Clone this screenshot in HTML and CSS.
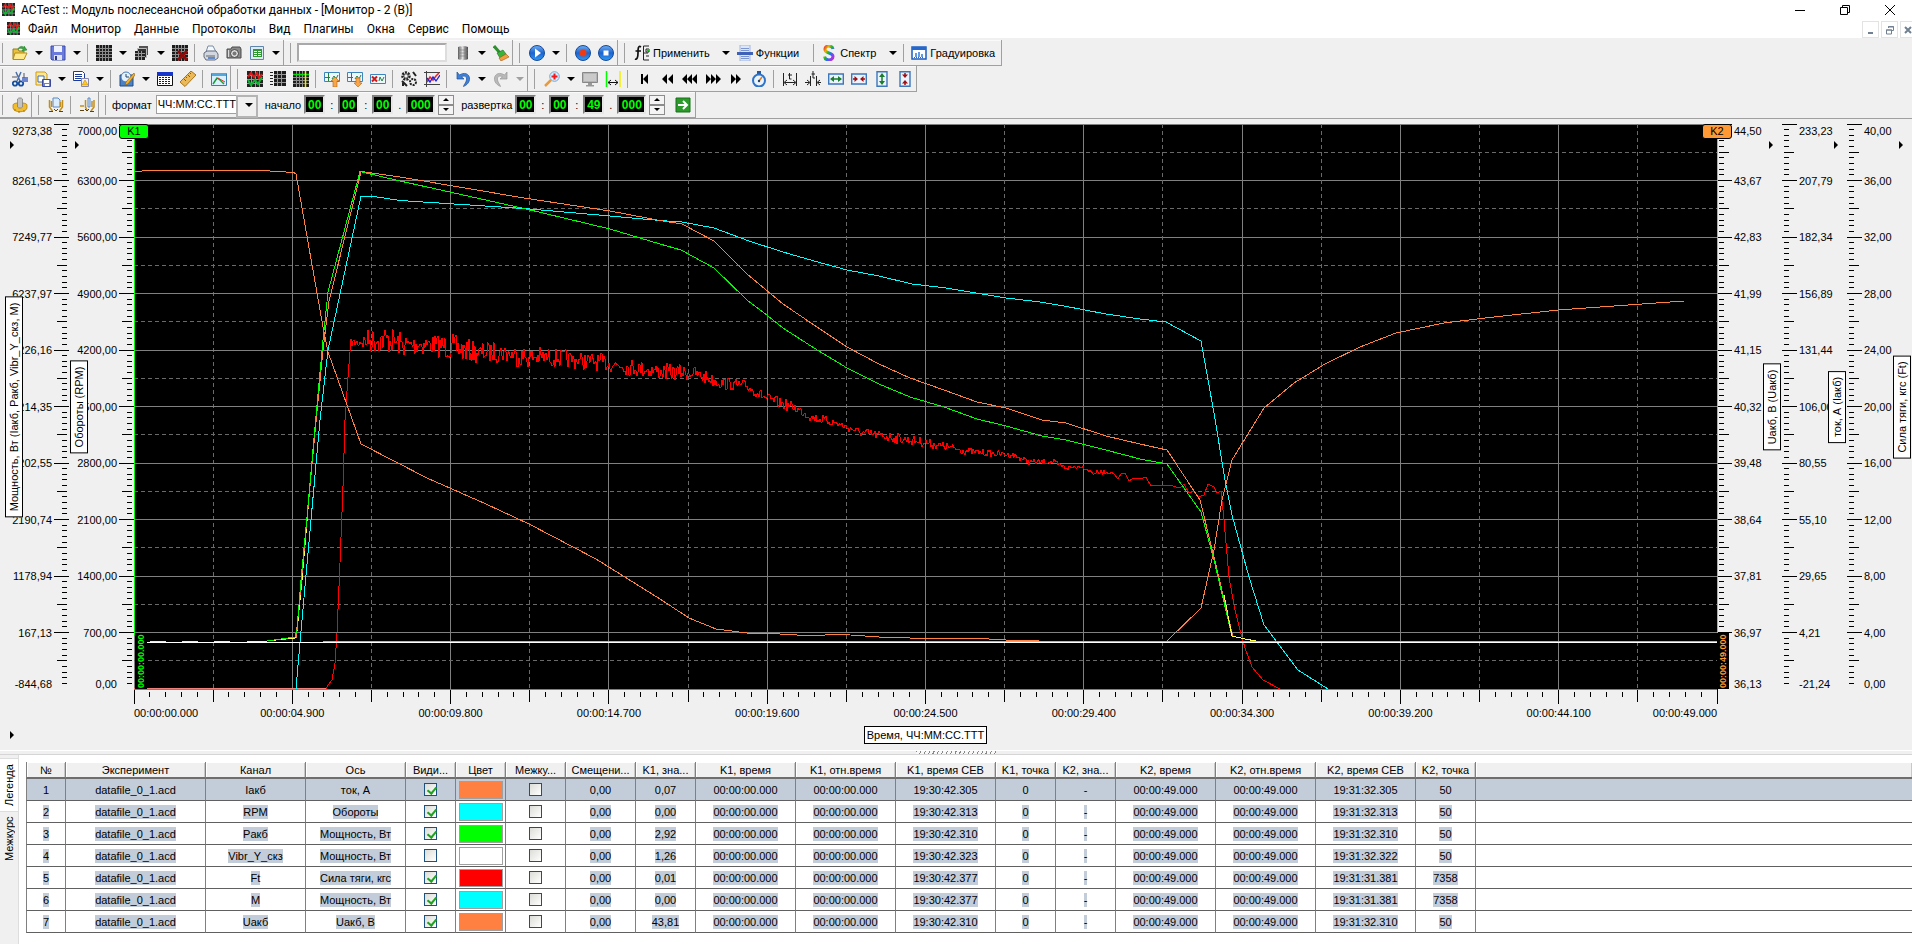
FILE: index.html
```html
<!DOCTYPE html>
<html lang="ru">
<head>
<meta charset="utf-8">
<title>ACTest :: Модуль послесеансной обработки данных - [Монитор - 2 (B)]</title>
<link rel="stylesheet" href="styles.css">
</head>
<body>
<svg class="symbols" aria-hidden="true">
  <defs>
    <linearGradient id="g-blue" x1="0" y1="0" x2="0" y2="1"><stop offset="0" stop-color="#6fb0f2"/><stop offset=".5" stop-color="#1d63cf"/><stop offset="1" stop-color="#2f9bf5"/></linearGradient>
    <linearGradient id="g-rain" x1="0" y1="0" x2="1" y2="1"><stop offset="0" stop-color="#e33"/><stop offset=".25" stop-color="#e8b400"/><stop offset=".45" stop-color="#2b2"/><stop offset=".65" stop-color="#36f"/><stop offset="1" stop-color="#d2c"/></linearGradient>
    <linearGradient id="g-metal"><stop offset="0" stop-color="#555"/><stop offset=".4" stop-color="#eee"/><stop offset="1" stop-color="#444"/></linearGradient>
  </defs>
  <symbol id="i-app" viewBox="0 0 16 16"><path d="M0 0h16v16H0z" fill="#222"/><path d="M0 4.500h16M0 8.500h16M0 12.500h16M4.500 0v16M8.500 0v16M12.500 0v16" stroke="#999"/><path d="M1 6l3-4 3 4 3-4 2 5 3-4" stroke="#e01818" stroke-width="2" fill="none"/><path d="M1 9l3 5 4-5 3 4 4-7" stroke="#0db531" stroke-width="2" fill="none"/></symbol>
  <symbol id="i-open" viewBox="0 0 16 16"><path d="M1 4h5l1 2h5v8H1z" fill="#e8c23c" stroke="#9a7a12"/><path d="M3 8h12l-3 6.500H1z" fill="#ffe98a" stroke="#b08d1c"/><path d="M6 4c1-3 5-3.500 6-1V1l3 4-5 1 1-1.500C10 3 8 3 6 4z" fill="#35a83c" stroke="#1c7423" stroke-width=".5"/></symbol>
  <symbol id="i-save" viewBox="0 0 16 16"><path d="M1 1h14v14H2l-1-1z" fill="#6b7bdc" stroke="#3a4aa8"/><path d="M4 1h8v6H4z" fill="#eef2ff"/><path d="M4 10h8v5H4z" fill="#dfe3f0"/><path d="M5 11h2v4H5z" fill="#2c3a94"/></symbol>
  <symbol id="i-grid" viewBox="0 0 16 16"><path d="M0 0h16v16H0z" fill="#1c1c1c"/><path d="M0 3.500h16M0 6.500h16M0 9.500h16M0 12.500h16M3.500 0v16M6.500 0v16M9.500 0v16M12.500 0v16" stroke="#8c8c8c"/></symbol>
  <symbol id="i-grids" viewBox="0 0 16 16"><path d="M5 1h9v9H5z" fill="#555"/><path d="M3.500 3.500h9v9h-9z" fill="#333" stroke="#bbb"/><path d="M1 6h10v9H1z" fill="#222"/><path d="M1 8.500h10M1 11.500h10M4.500 6v9M7.500 6v9" stroke="#999"/></symbol>
  <symbol id="i-gridx" viewBox="0 0 16 16"><use href="#i-grid"/><path d="M6 6l9 9M15 6l-9 9" stroke="#8e0b0b" stroke-width="3"/></symbol>
  <symbol id="i-print" viewBox="0 0 16 16"><path d="M3 7l2-6h5l3 6z" fill="#f4f8ff" stroke="#7b8ba5"/><path d="M1 8l3-2h9l2 3v4l-3 2H3l-2-3z" fill="#d3d8e0" stroke="#656c78"/><path d="M3 11h9" stroke="#666"/><path d="M5 13h7" stroke="#3a73c9" stroke-width="1.500"/></symbol>
  <symbol id="i-camera" viewBox="0 0 16 16"><path d="M1 4h4l1-2h8l1 2v9H1z" fill="#8a8a8a" stroke="#4b4b4b"/><circle cx="8.500" cy="8.500" r="4" fill="#ddd" stroke="#444"/><circle cx="8.500" cy="8.500" r="2" fill="#777"/><path d="M2.500 5v7" stroke="#ddd"/></symbol>
  <symbol id="i-report" viewBox="0 0 16 16"><path d="M1.500 1.500h13v13h-13z" fill="#dcebf5" stroke="#5e86ad"/><path d="M4 4h9v8H4z" fill="#2d9a2d"/><path d="M5 6.500h7M5 8.500h7M5 10.500h7" stroke="#fff"/><path d="M8.500 6v6" stroke="#2d9a2d"/></symbol>
  <symbol id="i-cyl" viewBox="0 0 16 16"><path d="M3 2c2-1.500 8-1.500 10 0v12c-2 1.500-8 1.500-10 0z" fill="url(#g-metal)"/><path d="M3 5h10M3 8h10M3 11h10M6 2v12M10 2v12" stroke="#777" stroke-width=".6"/></symbol>
  <symbol id="i-broom" viewBox="0 0 16 16"><path d="M1 1l6 7" stroke="#2d8f2d" stroke-width="3"/><path d="M4 8l6-3 3 4-6 4z" fill="#39b339" stroke="#1d701d" stroke-width=".6"/><path d="M6 13l7-4 3 3-8 4z" fill="#f0a040" stroke="#9a5a10" stroke-width=".6"/></symbol>
  <symbol id="i-play" viewBox="0 0 16 16"><circle cx="8" cy="8" r="7.500" fill="url(#g-blue)" stroke="#184a9a"/><path d="M6 3.500v9l6-4.500z" fill="#fff"/></symbol>
  <symbol id="i-rec" viewBox="0 0 16 16"><circle cx="8" cy="8" r="7.500" fill="url(#g-blue)" stroke="#184a9a"/><circle cx="8" cy="8" r="3.500" fill="#ee3b14"/></symbol>
  <symbol id="i-stop" viewBox="0 0 16 16"><circle cx="8" cy="8" r="7.500" fill="url(#g-blue)" stroke="#184a9a"/><path d="M5.500 5.500h5v5h-5z" fill="#fff"/></symbol>
  <symbol id="i-fx" viewBox="0 0 16 16"><path d="M7 2C4 0 4 4 4 8s-1 7-3 6M1.500 6H7" stroke="#111" stroke-width="1.700" fill="none"/><path d="M15 1H9.500v14H15M9.500 8H14M12 4h3v3h-3zM12 11h3" stroke="#222" fill="none"/><path d="M13 4h2v2h-2z" fill="#18c818"/></symbol>
  <symbol id="i-func" viewBox="0 0 16 16"><path d="M3 0h10v16H3z" fill="#dbe6fa" stroke="#a5b8de"/><path d="M4 3.500h8M4 5.500h8M4 11.500h8M4 13.500h8" stroke="#7c96d0"/><path d="M0 7h16v3H0z" fill="#3e62b8"/></symbol>
  <symbol id="i-spec" viewBox="0 0 16 16"><path d="M12 4C11 0 4 0 4 4.500S12 7 12 11.500 4 16 3.500 11.500" stroke="url(#g-rain)" stroke-width="3" fill="none"/></symbol>
  <symbol id="i-grad" viewBox="0 0 16 16"><path d="M1 2h14v12H1z" fill="#fff" stroke="#1b5cc0" stroke-width="1.500"/><path d="M1 2h14v3H1z" fill="#2468cf"/><path d="M5 12V8M8 12V7M11 12V9" stroke="#2e7be0" stroke-width="1.500"/><path d="M3 12.500h10" stroke="#2468cf" stroke-dasharray="1 1"/></symbol>
  <symbol id="i-cut" viewBox="0 0 16 16"><path d="M4 1l4 9M9 1L5 10" stroke="#4a6ea8" stroke-width="1.500"/><circle cx="3" cy="12.500" r="2.200" fill="none" stroke="#174f9e" stroke-width="1.800"/><circle cx="9" cy="12.500" r="2.200" fill="none" stroke="#174f9e" stroke-width="1.800"/><path d="M10 6h6v5h-6z" fill="#6f84cf"/><path d="M12 2v5M0 6h5" stroke="#556"/></symbol>
  <symbol id="i-copy" viewBox="0 0 16 16"><path d="M1 1h9l2 2v11H1z" fill="#ffe79a" stroke="#d09a10"/><path d="M3 5h6v6H3z" fill="#fff" stroke="#3c6fc0"/><path d="M7.500 8.500h8v7h-8z" fill="#7082cf" stroke="#3a4a98"/><path d="M9 9h5v3H9zM10 13h4v2h-4z" fill="#fff"/></symbol>
  <symbol id="i-list" viewBox="0 0 16 16"><path d="M.500.500h9l2 2v7h-11z" fill="#fff" stroke="#1c3b98"/><path d="M2 3.500h7M2 5.500h7M2 7.500h7" stroke="#1c3b98"/><path d="M8.500 7.500h7v8h-7z" fill="#eef" stroke="#88a"/><path d="M12 9l3 5H9z" fill="#ffca28" stroke="#c58b00" stroke-width=".6"/></symbol>
  <symbol id="i-clock" viewBox="0 0 16 16"><path d="M1 4h13v11H1z" fill="#4a82c8" stroke="#1f4b88"/><circle cx="7" cy="6" r="5" fill="#e4f1ff" stroke="#4779b8"/><path d="M7 3v3h3" stroke="#246" fill="none"/><path d="M15 2L7 11l-1 3 3-1 7-9z" fill="#f2b12c" stroke="#8a5b0a" stroke-width=".6"/></symbol>
  <symbol id="i-table" viewBox="0 0 16 16"><path d="M.500 1.500h15v13H.500z" fill="#fff" stroke="#111"/><path d="M0 1h16v4H0z" fill="#1735c8"/><path d="M2 6.500h12M2 8.500h12M2 10.500h12M2 12.500h12" stroke="#222" stroke-dasharray="2 1"/></symbol>
  <symbol id="i-ruler" viewBox="0 0 16 16"><path d="M0 11L11 0l5 4L5 15.500z" fill="#ebb958" stroke="#a8741a"/><path d="M4 8l2 2M6 6l1 1M8 4l2 2M10 2l1 1" stroke="#8a5b0a"/></symbol>
  <symbol id="i-chart" viewBox="0 0 16 16"><path d="M.500 2.500h15v12H.500z" fill="#d9f0ff" stroke="#3c7cae"/><path d="M1 2h14v3H1z" fill="#55a6d9"/><path d="M2 13l4-6 3 2 4 4" stroke="#1fa038" stroke-width="1.500" fill="none"/><path d="M3 11l4-4 7 4" stroke="#e03030" fill="none"/></symbol>
  <symbol id="i-gaxis" viewBox="0 0 16 16"><path d="M4 0h12v15H4z" fill="#1c1c1c"/><path d="M4 3.500h12M4 7.500h12M4 11.500h12M7.500 0v15M11.500 0v15" stroke="#999"/><path d="M0 1.500h3M0 4.500h3M0 7.500h3M0 10.500h3M0 13.500h3" stroke="#222"/></symbol>
  <symbol id="i-gcur" viewBox="0 0 16 16"><use href="#i-grid"/><path d="M0 3.500h16" stroke="#0d0" stroke-width="1.500"/><path d="M12.500 0v16" stroke="#ee0" stroke-width="1.500"/></symbol>
  <symbol id="i-up" viewBox="0 0 16 16"><path d="M.500 1.500h15v9H.500z" fill="#eef7ff" stroke="#3c84bd"/><path d="M1 6.500h5M4.500 2v8M8 8l2-3 2 3 2-4" stroke="#26813a" fill="none"/><path d="M11 6l4 4h-2v6H9v-6H7z" fill="#f7a64a" stroke="#b8620c" stroke-width=".6"/></symbol>
  <symbol id="i-down" viewBox="0 0 16 16"><path d="M.500 1.500h15v9H.500z" fill="#eef7ff" stroke="#3c84bd"/><path d="M1 6.500h5M4.500 2v8M8 8l2-3 2 3 2-4" stroke="#26813a" fill="none"/><path d="M11 16l4-4h-2V7H9v5H7z" fill="#f7a64a" stroke="#b8620c" stroke-width=".6"/></symbol>
  <symbol id="i-del" viewBox="0 0 16 16"><path d="M.500 3.500h15v9H.500z" fill="#eef7ff" stroke="#3c84bd"/><path d="M2 5.500l5 5M7 5.500l-5 5" stroke="#d01818" stroke-width="2"/><path d="M9 10l1-4 2 4 2-4" stroke="#26813a" fill="none"/></symbol>
  <symbol id="i-gears" viewBox="0 0 16 16"><circle cx="5" cy="5" r="3.500" fill="none" stroke="#222" stroke-width="2.500" stroke-dasharray="2 1"/><circle cx="5" cy="5" r="2.200" fill="none" stroke="#444"/><circle cx="12" cy="11" r="3" fill="none" stroke="#222" stroke-width="2" stroke-dasharray="2 1"/><path d="M1 10l5 5M12 1l3 4M2 15v-3" stroke="#222" stroke-width="2"/></symbol>
  <symbol id="i-plot" viewBox="0 0 16 16"><path d="M2.500 0v16M0 13.500h16M0 1.500h16" stroke="#444"/><path d="M3 11l3-5 3 3 3-4 3-3" stroke="#e22" stroke-width="1.500" fill="none"/><path d="M3 7l3 4 3-5 3 4 4-6" stroke="#22d" stroke-width="1.300" fill="none"/></symbol>
  <symbol id="i-undo" viewBox="0 0 16 16"><path d="M2 1v7h7L6.500 5.800C10 4 12 6 11.500 9c-.500 3-3 5-3 6.500C12 14 15 11 14.500 7 14 2.500 9 1 4.500 4z" fill="#3f80d8" stroke="#1d519c" stroke-width=".7"/></symbol>
  <symbol id="i-redo" viewBox="0 0 16 16"><path d="M14 1v7H7l2.500-2.200C6 4 4 6 4.500 9c.500 3 3 5 3 6.500C4 14 1 11 1.500 7 2 2.500 7 1 11.500 4z" fill="#b9b9b9" stroke="#999" stroke-width=".7"/></symbol>
  <symbol id="i-zoom" viewBox="0 0 16 16"><path d="M1 15l6-6" stroke="#e89a3c" stroke-width="2.500"/><circle cx="10.500" cy="5.500" r="4.800" fill="#d6ecff" stroke="#7aa6cf"/><path d="M10.500 2.500v6M7.500 5.500h6" stroke="#f01818" stroke-width="2"/></symbol>
  <symbol id="i-mon" viewBox="0 0 16 16"><path d="M.500 1.500h15v10H.500z" fill="#b4b4b4" stroke="#888"/><path d="M2 3h12v7H2z" fill="#cacaca"/><path d="M6 12h4v2h2v1.500H4V14h2z" fill="#999"/></symbol>
  <symbol id="i-curs" viewBox="0 0 16 16"><path d="M1.500 0v16" stroke="#0f0" stroke-width="1.500"/><path d="M15 0v16" stroke="#f5f000" stroke-width="1.500"/><path d="M3 11.500h10M6 9l-3 2.500L6 14M10 9l3 2.500-3 2.500" stroke="#111" fill="none"/></symbol>
  <symbol id="i-first" viewBox="0 0 16 16"><path d="M5 3h2v10H5zM12 3v10L7 8z" fill="#000"/></symbol>
  <symbol id="i-rw" viewBox="0 0 16 16"><path d="M8 3v10L3 8zM14 3v10L9 8z" fill="#000"/></symbol>
  <symbol id="i-rw3" viewBox="0 0 16 16"><path d="M5 3v10L0 8zM10 3v10L5 8zM15 3v10l-5-5z" fill="#000"/></symbol>
  <symbol id="i-ff3" viewBox="0 0 16 16"><path d="M1 3v10l5-5zM6 3v10l5-5zM11 3v10l5-5z" fill="#000"/></symbol>
  <symbol id="i-ff" viewBox="0 0 16 16"><path d="M3 3v10l5-5zM8 3v10l5-5z" fill="#000"/></symbol>
  <symbol id="i-watch" viewBox="0 0 16 16"><path d="M6 0h4v3H6z" fill="#26589e"/><circle cx="8" cy="9.500" r="6" fill="#eaf4ff" stroke="#2f74c8" stroke-width="2"/><path d="M8 10l3-4" stroke="#e07a18" stroke-width="1.500"/><circle cx="8" cy="10" r="1.200" fill="#246"/></symbol>
  <symbol id="i-tspan" viewBox="0 0 16 16"><path d="M1.500 2v13M14.500 2v13M3 11.500h10M5 9l-3 2.500L5 14M11 9l3 2.500-3 2.500M7.500 2v6h2M6 4h4" stroke="#222" fill="none"/></symbol>
  <symbol id="i-tsqz" viewBox="0 0 16 16"><path d="M5.500 5v10M11.500 5v10M0 11.500h4M13 11.500h3M2 9l3 2.500L2 14M15 9l-3 2.500 3 2.500M8 0v7h2M6.500 3H10" stroke="#222" fill="none"/></symbol>
  <symbol id="i-hexp" viewBox="0 0 16 16"><path d="M.700 3h14.600v10H.700z" fill="#e9f4ff" stroke="#3e76ba" stroke-width="1.400"/><path d="M5 8h6" stroke="#1b7e2a" stroke-width="1.500"/><path d="M2 8l4-3v6zM14 8l-4-3v6z" fill="#1b7e2a"/></symbol>
  <symbol id="i-hsqz" viewBox="0 0 16 16"><path d="M.700 3h14.600v10H.700z" fill="#e9f4ff" stroke="#3e76ba" stroke-width="1.400"/><path d="M2 8h3M11 8h3" stroke="#9e1010" stroke-width="1.500"/><path d="M7 8L3.500 5v6zM9 8l3.500-3v6z" fill="#9e1010"/></symbol>
  <symbol id="i-vexp" viewBox="0 0 16 16"><path d="M3 .700h10v14.600H3z" fill="#e9f4ff" stroke="#3e76ba" stroke-width="1.400"/><path d="M8 5v6" stroke="#1b7e2a" stroke-width="1.500"/><path d="M8 2l-3 4h6zM8 14l-3-4h6z" fill="#1b7e2a"/></symbol>
  <symbol id="i-vsqz" viewBox="0 0 16 16"><path d="M3 .700h10v14.600H3z" fill="#e9f4ff" stroke="#3e76ba" stroke-width="1.400"/><path d="M8 2v3M8 11v3" stroke="#9e1010" stroke-width="1.500"/><path d="M8 7L5 3.500h6zM8 9l-3 3.500h6z" fill="#9e1010"/></symbol>
  <symbol id="i-stamp" viewBox="0 0 16 16"><path d="M1 8c0-3 14-3 14 0v3c-1 5-13 5-14 0z" fill="#f1bd2e" stroke="#a97708" stroke-width=".7"/><path d="M2 13h2M6 15h2M11 14h2" stroke="#a97708"/><path d="M5.500 2c1-1.500 4-1.500 5 0v8c-1 1.500-4 1.500-5 0z" fill="#c4c4c4" stroke="#777" stroke-width=".7"/></symbol>
  <symbol id="i-hand1" viewBox="0 0 16 16"><path d="M5 1h5l2 2v7H5z" fill="#dcecff" stroke="#5b87c4"/><path d="M1.500 3v7l3 4M14.500 3v7l-3 4M3.500 4v6M12.500 5v5" stroke="#c08f22" stroke-width="1.500" fill="none"/><path d="M1 14.500h4M11 14.500h4M6 12l2 2 2-2" stroke="#5a4210" fill="none"/></symbol>
  <symbol id="i-hand2" viewBox="0 0 16 16"><path d="M9 1h2v9H9z" fill="#dcecff" stroke="#5b87c4"/><path d="M6.500 3v7l2 4M15 3v7l-3 4M1 9h4M13 4v6" stroke="#c08f22" stroke-width="1.500" fill="none"/><path d="M1 13.500h4M11 14.500h4M6 12l2 2 2-2" stroke="#5a4210" fill="none"/></symbol>
  <symbol id="i-go" viewBox="0 0 16 16"><path d="M1 1h14v14H1z" fill="#2b9a2b" stroke="#1a6f1a"/><path d="M3 8h9M8 4l4 4-4 4" stroke="#fff" stroke-width="2" fill="none"/></symbol>
</svg>

<header class="titlebar">
  <svg class="app-icon" aria-hidden="true"><use href="#i-app"/></svg>
  <h1>ACTest :: Модуль послесеансной обработки данных - [Монитор - 2 (B)]</h1>
  <div class="win-controls">
    <button aria-label="Свернуть"><svg viewBox="0 0 10 10"><path d="M0 5.500h10"/></svg></button>
    <button aria-label="Восстановить"><svg viewBox="0 0 10 10"><path d="M.500 2.500h7v7h-7zM2.500 2.500v-2h7v7h-2"/></svg></button>
    <button aria-label="Закрыть"><svg viewBox="0 0 10 10"><path d="M0 0l10 10M10 0L0 10"/></svg></button>
  </div>
</header>

<nav class="menubar">
  <svg class="app-icon" aria-hidden="true"><use href="#i-app"/></svg>
  <button>Файл</button><button>Монитор</button><button>Данные</button><button>Протоколы</button><button>Вид</button><button>Плагины</button><button>Окна</button><button>Сервис</button><button>Помощь</button>
  <div class="mdi-controls">
    <button aria-label="Свернуть окно"><svg viewBox="0 0 10 10"><path d="M2 8h5" stroke-width="2"/></svg></button>
    <button aria-label="Восстановить окно"><svg viewBox="0 0 10 10"><path d="M1.500 5h5v4h-5zM3.500 3V1.500h5v4H7M1 5h6M3 2h6"/></svg></button>
    <button aria-label="Закрыть окно"><svg viewBox="0 0 10 10"><path d="M1 2l6 6M7 2L1 8" stroke-width="2"/></svg></button>
  </div>
</nav>

<div class="toolbars">
  <div class="bar-row">
    <div class="band first" data-tools="open:Открыть v save:Сохранить v | grid:Монитор v grids:Окна v gridx:Закрыть-монитор | print:Печать camera:Снимок report:Отчёт v"></div>
    <div class="band"><input class="search" type="text" aria-label="Канал"><span class="tools" data-tools="cyl:Фильтр v broom:Очистить"></span></div>
    <div class="band" data-tools="play:Пуск v | rec:Запись stop:Стоп"></div>
    <div class="band text-band">
      <button class="text-btn"><svg><use href="#i-fx"/></svg>Применить</button><span class="tools gap-mid" data-tools="v"></span>
      <button class="text-btn"><svg><use href="#i-func"/></svg>Функции</button><span class="tools gap-wide" data-tools="|"></span>
      <button class="text-btn"><svg><use href="#i-spec"/></svg>Спектр</button><span class="tools gap-mid" data-tools="v |"></span>
      <button class="text-btn"><svg><use href="#i-grad"/></svg>Градуировка</button>
    </div>
  </div>
  <div class="bar-row">
    <div class="band first" data-tools="cut:Вырезать copy:Копировать v list:Список v | clock:Время v table:Таблица ruler:Измерение | chart:График"></div>
    <div class="band" data-tools="app:Сигналы gaxis:Оси gcur:Курсоры | up:Вверх down:Вниз del:Удалить | gears:Настройка plot:Графики | undo:Отменить v redo:Повторить d"></div>
    <div class="band" data-tools="zoom:Масштаб v mon:Экран curs:Между-курсорами | first:В-начало rw:Назад rw3:Быстро-назад ff3:Быстро-вперёд ff:Вперёд watch:Секундомер | tspan:Развернуть tsqz:Сжать hexp:Шире hsqz:Уже vexp:Выше vsqz:Ниже"></div>
  </div>
  <div class="bar-row">
    <div class="band first" data-tools="stamp:Метка"></div>
    <div class="band" data-tools="hand1:Захват | hand2:Захват-курсора"></div>
    <div class="band time-band">
      <label for="fmt">формат</label>
      <span class="combo"><select id="fmt"><option>ЧЧ:ММ:СС.ТТТ</option></select></span>
      <fieldset aria-label="начало"><span class="cap">начало</span><span class="clock" data-time="00 : 00 : 00 . 000"></span></fieldset>
      <fieldset aria-label="развертка"><span class="cap">развертка</span><span class="clock" data-time="00 : 00 : 49 . 000"></span></fieldset>
      <button class="tool go" aria-label="Применить интервал"><svg><use href="#i-go"/></svg></button>
    </div>
  </div>
</div>

<main class="monitor">
  <div class="y-axis left" data-title="Мощность, Вт (Iакб, Pакб, Vibr_Y_скз, М)" data-labels="9273,38 8261,58 7249,77 6237,97 5226,16 4214,35 3202,55 2190,74 1178,94 167,13 -844,68"></div>
  <div class="y-axis left" data-title="Обороты (RPM)" data-labels="7000,00 6300,00 5600,00 4900,00 4200,00 3500,00 2800,00 2100,00 1400,00 700,00 0,00"></div>
  <div class="plot">
    <svg id="plot" viewBox="134 124 1583 565" preserveAspectRatio="none" role="img" aria-label="Графики каналов"></svg>
    <span class="cursor-line k1"></span><span class="cursor-line k2"></span>
    <span class="flag k1">K1</span><span class="flag k2">K2</span>
    <span class="stamp k1">00:00:00.000</span><span class="stamp k2">00:00:49.000</span>
  </div>
  <div class="y-axis right" data-title="Uакб, В (Uакб)" data-labels="44,50 43,67 42,83 41,99 41,15 40,32 39,48 38,64 37,81 36,97 36,13"></div>
  <div class="y-axis right" data-title="ток, А (Iакб)" data-labels="233,23 207,79 182,34 156,89 131,44 106,00 80,55 55,10 29,65 4,21 -21,24"></div>
  <div class="y-axis right" data-title="Сила тяги, кгс (Ft)" data-labels="40,00 36,00 32,00 28,00 24,00 20,00 16,00 12,00 8,00 4,00 0,00"></div>
  <div class="time-axis"><svg id="time"></svg><span class="time-name">Время, ЧЧ:ММ:СС.ТТТ</span></div>
  <div class="corner"><svg viewBox="0 0 4 8"><path d="M0 0l4 4-4 4z"/></svg></div>
</main>

<div class="splitter"><span></span></div>

<section class="legend">
  <div class="side-tabs" role="tablist"><button role="tab" aria-selected="true">Легенда</button><button role="tab" aria-selected="false">Межкурс</button></div>
  <div class="legend-body">
    <table>
      <colgroup><col class="w40"><col class="w140"><col class="w100"><col class="w100"><col class="w50"><col class="w50"><col class="w60"><col class="w70"><col class="w60"><col class="w100"><col class="w100"><col class="w100"><col class="w60"><col class="w60"><col class="w100"><col class="w100"><col class="w100"><col class="w60"><col></colgroup>
      <thead><tr><th>№</th><th>Эксперимент</th><th>Канал</th><th>Ось</th><th>Види...</th><th>Цвет</th><th>Межку...</th><th>Смещени...</th><th>K1, зна...</th><th>K1, время</th><th>K1, отн.время</th><th>K1, время СЕВ</th><th>K1, точка</th><th>K2, зна...</th><th>K2, время</th><th>K2, отн.время</th><th>K2, время СЕВ</th><th>K2, точка</th><th></th></tr></thead>
      <tbody id="rows"></tbody>
    </table>
  </div>
</section>
<script src="script.js"></script>
</body>
</html>
```

FILE: styles.css
```css
* { box-sizing: border-box; }
html, body { height: 100%; }
body {
  margin: 0;
  display: flex;
  flex-direction: column;
  overflow: hidden;
  background: #f0f0f0;
  color: #000;
  font: 11px/14px "Liberation Sans", Arial, sans-serif;
}
button { font: inherit; color: inherit; background: none; border: 0; padding: 0; margin: 0; }
svg { display: block; }
.symbols { position: absolute; width: 0; height: 0; }

/* title and menu */
.titlebar, .menubar {
  display: flex;
  align-items: center;
  background: #fff;
  font: 12px/16px Roboto, "Noto Sans", sans-serif;
  flex: none;
}
.titlebar { height: 19px; padding-left: 2px; }
.titlebar h1 { font: inherit; margin: 0 auto 0 6px; }
.app-icon { width: 13px; height: 13px; flex: none; }
.win-controls { display: flex; height: 16px; }
.win-controls button { width: 45px; display: grid; place-items: center; }
.win-controls svg { width: 10px; height: 10px; fill: none; stroke: #000; overflow: visible; }
.menubar { height: 19px; padding-left: 7px; }
.menubar > button { margin-left: 13px; }
.menubar > .app-icon + button { margin-left: 8px; }
.mdi-controls { margin-left: auto; margin-right: -5px; display: flex; gap: 2px; height: 17px; align-self: flex-end; }
.mdi-controls button { width: 17px; border: 1px solid #e3e3e3; display: grid; place-items: center; }
.mdi-controls svg { width: 10px; height: 10px; fill: none; stroke: #708090; }

/* toolbars */
.toolbars { flex: none; padding-top: 2px; border-bottom: 1px solid #a0a0a0; }
.bar-row { display: flex; height: 26px; }
.band {
  display: flex;
  align-items: center;
  padding-left: 12px;
  border: solid #a0a0a0;
  border-width: 0 1px 1px 0;
  box-shadow: inset 0 1px #fafafa;
  background: linear-gradient(#a0a0a0, #a0a0a0) 6px 3px / 1px 20px no-repeat;
}
.band.first { padding-left: 8px; background-position: 2px 3px; }
.band.text-band { padding: 0 3px 0 13px; }
.tools { display: flex; align-items: center; }
.tool { width: 23px; height: 22px; display: grid; place-items: center; }
.tool svg { width: 16px; height: 16px; }
.drop { width: 15px; height: 22px; display: grid; place-items: center; }
.drop::after { content: ""; border: 4px solid transparent; border-top-color: #000; border-bottom: 0; }
.drop:disabled::after { border-top-color: #a0a0a0; }
.sep { width: 1px; height: 18px; margin: 0 4px 0 3px; background: #a0a0a0; }
.search { width: 150px; height: 19px; margin: 0 4px 0 1px; border: 2px solid #a9a9a9; border-right-color: #ddd; border-bottom-color: #ddd; background: #fff; }
.text-btn { display: flex; align-items: center; gap: 3px; height: 22px; padding: 0 3px; }
.text-btn svg { width: 16px; height: 16px; }
.gap-mid { margin-left: 6px; }
.gap-wide { margin-left: 8px; }
.band.time-band { padding-left: 13px; }
.combo { position: relative; margin-left: 4px; }
.combo select {
  appearance: none;
  width: 102px; height: 19px;
  margin: 0; padding: 0 0 0 1px;
  display: block;
  border: 1px solid #a0a0a0; border-radius: 0;
  background: #fff; color: #000;
  font: 11px/15px "Liberation Sans", Arial, sans-serif;
}
.combo::before { content: ""; position: absolute; right: 0; top: 0; width: 18px; height: 19px; border: 2px solid #b4b4b4; background: #f0f0f0; pointer-events: none; }
.combo::after { content: ""; position: absolute; right: 5px; top: 8px; border: 4px solid transparent; border-top-color: #000; border-bottom: 0; pointer-events: none; }
fieldset { display: flex; align-items: center; border: 0; margin: 0 0 0 7px; padding: 0; min-width: 0; }
.clock { display: flex; align-items: center; margin-left: 3px; }
.clock input {
  width: 21px; height: 19px; padding: 0;
  border: 2px solid #808080; border-right-color: #e6e6e6; border-bottom-color: #e6e6e6;
  background: #000; color: #0f0; text-align: center;
  font: bold 12px/14px "Liberation Sans", Arial, sans-serif;
}
.clock input.ms { width: 29px; }
.clock i { width: 13px; text-align: center; font-style: normal; }
.spin { display: flex; flex-direction: column; margin-left: 3px; width: 16px; }
.spin button { height: 10px; border: 1px solid #8c8c8c; background: #f4f4f4; display: grid; place-items: center; }
.spin button::after { content: ""; border: 3px solid transparent; border-bottom-color: #000; border-top: 0; }
.spin button + button::after { border-top: 3px solid #000; border-bottom: 0; }
.go { margin: 0 1px 0 6px; }

/* monitor */
.monitor {
  flex: 1;
  min-height: 0;
  padding: 5px 0 0 4px;
  display: grid;
  grid-template-columns: 65px 65px minmax(0, 1fr) 65px 65px 65px;
  grid-template-rows: minmax(0, 1fr) 61px;
}
.y-axis { position: relative; min-height: 0; }
.y-axis svg { width: 100%; height: 100%; overflow: visible; }
.y-axis line, .time-axis line { stroke: #000; shape-rendering: crispEdges; }
.y-axis .title {
  position: absolute;
  top: 50%;
  transform: translateY(-50%) rotate(180deg);
  writing-mode: vertical-rl;
  width: 18px;
  padding: 5px 0;
  line-height: 16px;
  border: 1px solid #000;
  background: #fff;
  white-space: nowrap;
}
.left .title { left: 1px; }
.right .title { right: 1px; }
.plot { position: relative; z-index: 1; min-height: 0; }
.plot svg { width: 100%; height: 100%; background: #000; overflow: visible; }
.plot svg * { fill: none; vector-effect: non-scaling-stroke; shape-rendering: crispEdges; }
.grid { stroke: #808080; }
.grid.half { stroke: #6a6a6a; stroke-dasharray: 4 3; }
.s-orange { stroke: #ff8040; }
.s-green { stroke: #0f0; }
.s-cyan { stroke: #0ff; }
.s-red { stroke: #f00; }
.s-white { stroke: #fff; }
.s-yellow { stroke: #ff4; }
.s-salmon { stroke: #f08078; }
.cursor-line { position: absolute; top: 0; bottom: 54px; width: 1px; }
.cursor-line.k1 { left: 0; background: #0f0; }
.cursor-line.k2 { right: -1px; background: #ff9933; }
.flag {
  position: absolute; top: 0;
  width: 30px; height: 15px;
  border: 1px solid #000; border-radius: 3px;
  text-align: center; line-height: 13px;
}
.flag.k1 { left: -15px; background: #0f0; }
.flag.k2 { right: -15px; background: #ff9933; }
.stamp {
  position: absolute; bottom: 0;
  width: 12px; height: 56px;
  writing-mode: vertical-rl; transform: rotate(180deg);
  font: bold 9px/12px "Liberation Sans", Arial, sans-serif;
  text-align: center; white-space: nowrap;
  background: #000;
}
.stamp.k1 { left: 1px; color: #0f0; }
.stamp.k2 { right: -12px; color: #ff9933; }
.time-axis { grid-column: 3; grid-row: 2; display: flex; flex-direction: column; align-items: center; }
.time-axis svg { width: 100%; height: 37px; overflow: visible; }
.time-name { border: 1px solid #000; background: #fff; padding: 1px 2px; }
.corner { grid-column: 1; grid-row: 2; padding: 42px 0 0 6px; }
.corner svg { width: 4px; height: 8px; }

.splitter { flex: none; height: 5px; border-top: 1px solid #fff; border-bottom: 1px solid #d5d5d5; display: flex; justify-content: center; }
.splitter span { width: 80px; height: 3px; background: repeating-linear-gradient(115deg, #888 0 1px, #f8f8f8 1px 4px); }

/* legend */
.legend { flex: none; display: flex; height: 189px; }
.side-tabs { width: 18px; flex: none; display: flex; flex-direction: column; padding-top: 3px; }
.side-tabs button {
  writing-mode: vertical-rl; transform: rotate(180deg);
  height: 54px; width: 18px; line-height: 16px;
}
.side-tabs button[aria-selected="true"] { background: #fff; border: solid #ddd; border-width: 1px 0; }
.legend-body { flex: 1; min-width: 0; background: #fff; padding: 7px 0 0 7px; border-left: 1px solid #ddd; }
table { width: 100%; table-layout: fixed; border-collapse: separate; border-spacing: 0; }
.w40 { width: 40px; } .w50 { width: 50px; } .w60 { width: 60px; } .w70 { width: 70px; } .w100 { width: 100px; } .w140 { width: 140px; }
th, td { padding: 0; text-align: center; white-space: nowrap; overflow: hidden; }
th {
  height: 17px;
  font-weight: normal;
  background: #f0f0f0;
  border-right: 1px solid #808080;
  border-bottom: 2px solid #6e6e6e;
  box-shadow: inset 1px 1px #fff, inset -1px 0 #c8c8c8;
}
td { height: 22px; border-right: 1px solid #808080; border-bottom: 1px solid #606060; }
th:first-child, td:first-child { border-left: 1px solid #808080; }
td:last-child, th:last-child { border-right: 0; }
tr.current td, td span { background: #c3cdd9; }
td span { display: inline-block; }
td input {
  appearance: none;
  display: block;
  width: 13px; height: 13px; margin: 0 auto;
  border: 1px solid #1c5180;
  background: linear-gradient(135deg, #dcdcd7, #fff);
}
td input:checked::after {
  content: "";
  display: block;
  width: 4px; height: 7px; margin: 1px 0 0 4px;
  border: solid #21a121; border-width: 0 2px 2px 0;
  transform: rotate(40deg);
}
.swatch { display: block; width: 44px; height: 18px; margin: 0 auto; border: 1px solid #a0a0a0; }
.swatch.orange { background: #ff8040; }
.swatch.cyan { background: #0ff; }
.swatch.green { background: #0f0; }
.swatch.white { background: #fff; }
.swatch.red { background: #f00; }
```

FILE: script.js
```js
const SVG = 'http://www.w3.org/2000/svg';
function add(parent, tag, attrs, text) {
  const el = document.createElementNS(SVG, tag);
  for (const key in attrs) el.setAttribute(key, attrs[key]);
  if (text) el.textContent = text;
  parent.appendChild(el);
  return el;
}

// toolbars: "icon:label", "v" = drop-down, "d" = disabled drop-down, "|" = separator
document.querySelectorAll('[data-tools]').forEach(host => {
  host.innerHTML = host.dataset.tools.split(' ').map(t => {
    if (t === 'v') return '<button class="drop" aria-label="Список"></button>';
    if (t === 'd') return '<button class="drop" aria-label="Список" disabled></button>';
    if (t === '|') return '<span class="sep"></span>';
    const [icon, name] = t.split(':');
    return `<button class="tool" aria-label="${name.replace('-', ' ')}"><svg><use href="#i-${icon}"/></svg></button>`;
  }).join('');
});

document.querySelectorAll('[data-time]').forEach(host => {
  host.innerHTML = host.dataset.time.split(' ').map(p =>
    /\d/.test(p) ? `<input type="text" aria-label="Время" value="${p}"${p.length > 2 ? ' class="ms"' : ''}>` : `<i>${p}</i>`
  ).join('') + '<span class="spin"><button aria-label="Больше"></button><button aria-label="Меньше"></button></span>';
});

// vertical axes
document.querySelectorAll('.y-axis').forEach(axis => {
  const left = axis.classList.contains('left');
  const svg = add(axis, 'svg', {});
  for (let i = 0; i < 100; i++) {
    const [a, b] = i % 10 === 0 ? (left ? [50, 65] : [0, 15]) : i % 5 === 0 ? (left ? [53, 63] : [2, 12]) : (left ? [58, 63] : [2, 7]);
    add(svg, 'line', { x1: a, x2: b, y1: i + '%', y2: i + '%' });
  }
  const labels = axis.dataset.labels.split(' ');
  labels.forEach((label, i) => {
    const dy = i === 0 ? 11 : i === labels.length - 1 ? -1 : 4;
    add(svg, 'text', { x: left ? 48 : 17, y: i * 10 + '%', dy, 'text-anchor': left ? 'end' : 'start' }, label);
  });
  add(svg, 'path', { d: left ? 'M6 17l4 4-4 4z' : 'M52 17l4 4-4 4z' });
  const title = document.createElement('span');
  title.className = 'title';
  title.textContent = axis.dataset.title;
  axis.appendChild(title);
});

// time axis
const time = document.getElementById('time');
for (let i = 0; i <= 100; i++) {
  const major = i % 10 === 0, mid = i % 5 === 0;
  add(time, 'line', { x1: i + '%', x2: i + '%', y1: mid ? 0 : 3, y2: major ? 15 : mid ? 13 : 8 });
}
['00.000', '04.900', '09.800', '14.700', '19.600', '24.500', '29.400', '34.300', '39.200', '44.100', '49.000'].forEach((t, i) => {
  add(time, 'text', { x: i * 10 + '%', y: 28, 'text-anchor': i === 0 ? 'start' : i === 10 ? 'end' : 'middle' }, '00:00:' + t);
});

// plot
const plot = document.getElementById('plot');
for (let i = 0; i <= 20; i++) {
  const x = 134 + i * 79.15, y = 124 + i * 28.25, cls = i % 2 ? 'grid half' : 'grid';
  add(plot, 'path', { class: cls, d: `M${x} 124V689M134 ${y}H1717` });
}
function series(cls, points) {
  add(plot, 'polyline', { class: 's-' + cls, points });
}

// thrust: x, y, noise amplitude
const thrust = [[351,343,4],[368,341,13],[386,339,15],[404,345,13],[429,344,11],[454,348,14],[479,353,11],[500,352,11],[525,357,12],[557,358,10],[607,363,9],[629,367,9],[664,372,9],[693,373,8],[721,383,7],[746,386,6],[768,399,6],[796,408,6],[811,417,5],[836,423,5],[859,432,5],[883,436,6],[928,443,5],[972,452,4],[1013,455,3],[1030,462,3],[1053,462,3],[1066,468,3],[1082,466,2],[1093,473,3],[1111,472,2]];
let seed = 7;
function rnd() { seed = (seed * 16807) % 2147483647; return seed / 2147483647 * 2 - 1; }
const noisy = [];
for (let k = 0; k < thrust.length - 1; k++) {
  const [x0, y0, a0] = thrust[k], [x1, y1, a1] = thrust[k + 1];
  for (let x = x0; x < x1; x += 1) {
    const f = (x - x0) / (x1 - x0);
    const r = rnd();
    noisy.push(x + ',' + (y0 + (y1 - y0) * f + (a0 + (a1 - a0) * f) * r * (0.5 + 0.5 * Math.abs(r))).toFixed(1));
  }
}
series('salmon', '134,688.5 326,688.5');
series('red', '326,689 328,685 332,680 335,663 337,633 340,563 343,487 345,420 348,377 ' + noisy.join(' ') +
  ' 1111,472 1114,474 1118,479 1121,474 1125,473 1129,481 1134,478 1140,479 1146,477 1151,486 1158,485 1164,486 1170,485 1176,487 1180,488 1184,484 1189,493 1194,491 1198,497 1204,495 1208,484 1212,486 1214,487 1217,493 1221,491 1224,520 1229,577 1235,610 1240,630 1245,648 1252,667 1263,680 1280,689');
series('orange', '134,171.5 150,170.5 262,170.5 294,172.5 296,174 323,327 328,352 361,444 427,478 486,504 529,524 596,559 660,599 689,618 716,629 747,633 780,634 814,636 836,634 879,637 910,638 941,639 972,638 1006,640 1039,641 1071,643 1086,642 1167,641 1201,608 1214,550 1222,500 1232,460 1243,442 1264,408 1294,383 1325,364 1360,347 1396,333 1444,323 1485,318 1558,310 1600,307 1684,301');
series('cyan', '296,689 300,642 320,420 328,350 361,196 377,197 400,200.500 524,208.500 610,216 660,220.500 682,222 714,228 749,241 783,252 814,261 847,270 879,276 912,284 946,288 1006,298 1040,302 1064,306 1106,314 1140,319 1166,322 1201,341 1214,413 1225,480 1232,515 1249,577 1264,625 1298,670 1328,689');
series('yellow', '267,641 295,638 297,631 302,580 315,427');
series('orange', '296,638 315,432 323,350 329,301 361,171.500 400,177 524,198 610,211 660,220.500 682,224 714,241 747,274 783,304 814,325 847,347 879,364 910,378 944,390 977,402 1006,408 1042,420 1066,423 1106,436 1140,444 1167,450 1200,500 1214,557 1233,637');
series('green', '267,641 295,637 297,630 301,580 307,517 315,427 323,340 328,292 360,171.500 400,181 524,208.500 610,229 660,244 681,250 714,268 747,300 768,316 783,328 814,348 847,368 879,384 910,397 944,407 977,419 1006,426 1042,436 1066,440 1106,450 1140,459 1167,464 1201,512 1214,560 1232,636');
series('yellow', '1224,595 1232,636 1245,639 1256,641');
series('white', '146,642.500 1717,642.500');
series('cyan', '323,641.500 1717,641.500');
add(plot, 'path', { class: 's-yellow', d: 'M150 641.500h16M182 641.500h16M214 641.500h16M247 641.500h20' });

// legend
const rows = [
  ['Iакб', 'ток, А', 1, 'orange', '0,07', '42.305', '32.305', '50'],
  ['RPM', 'Обороты', 1, 'cyan', '0,00', '42.313', '32.313', '50'],
  ['Pакб', 'Мощность, Вт', 1, 'green', '2,92', '42.310', '32.310', '50'],
  ['Vibr_Y_скз', 'Мощность, Вт', 0, 'white', '1,26', '42.323', '32.322', '50'],
  ['Ft', 'Сила тяги, кгс', 1, 'red', '0,01', '42.377', '31.381', '7358'],
  ['М', 'Мощность, Вт', 1, 'cyan', '0,00', '42.377', '31.381', '7358'],
  ['Uакб', 'Uакб, В', 1, 'orange', '43,81', '42.310', '32.310', '50']
];
const cell = t => `<td><span>${t}</span></td>`;
document.getElementById('rows').innerHTML = rows.map((r, i) =>
  `<tr${i ? '' : ' class="current"'}>` + cell(i + 1) + cell('datafile_0_1.acd') + cell(r[0]) + cell(r[1]) +
  `<td><input type="checkbox" aria-label="Видимость ${r[0]}"${r[2] ? ' checked' : ''}></td>` +
  `<td><div class="swatch ${r[3]}"></div></td>` +
  `<td><input type="checkbox" aria-label="Межкурсорный ${r[0]}"></td>` +
  ['0,00', r[4], '00:00:00.000', '00:00:00.000', '19:30:' + r[5], '0', '-', '00:00:49.000', '00:00:49.000', '19:31:' + r[6], r[7]].map(cell).join('') +
  '<td></td></tr>').join('');
```
